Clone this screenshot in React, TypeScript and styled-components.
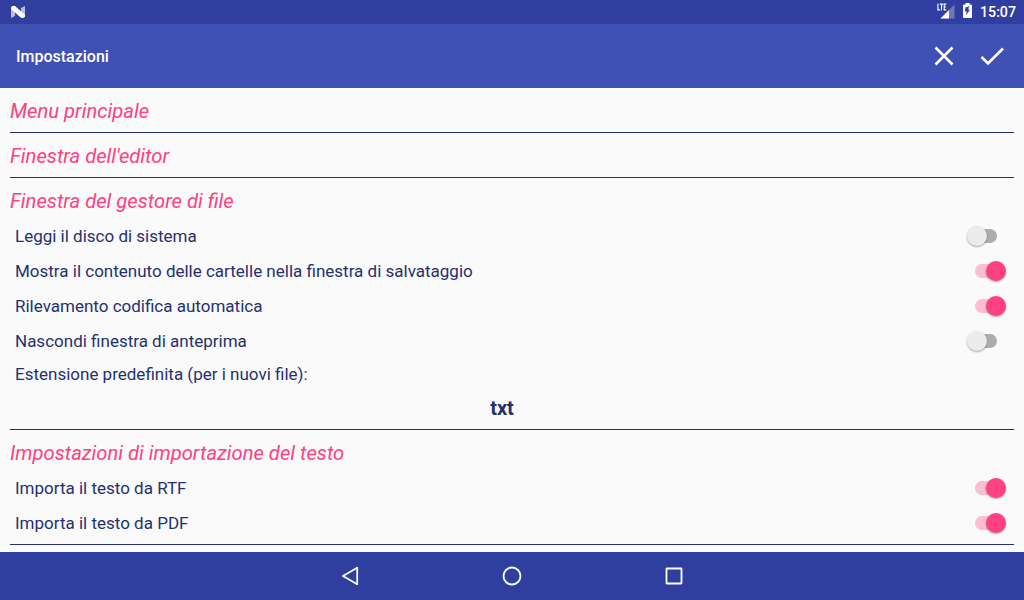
import React, { useState } from 'react'
import styled, { createGlobalStyle } from 'styled-components'

const color = {
  primary: '#3f51b5',
  primaryDark: '#303f9f',
  accent: '#ff4081',
  text: '#25316f',
  background: '#fafafa',
}

interface Option {
  label: string
  on: boolean
}

interface SettingRowProps {
  option: Option
}

const SettingRow = ({ option }: SettingRowProps) => {
  const [on, setOn] = useState(option.on)

  return (
    <Row>
      <Label>{option.label}</Label>
      <Switch
        type="button"
        role="switch"
        aria-checked={on}
        aria-label={option.label}
        $on={on}
        onClick={() => setOn(!on)}
      >
        <Track $on={on} />
        <Thumb $on={on} />
      </Switch>
    </Row>
  )
}

const fileOptions: Option[] = [
  { label: 'Leggi il disco di sistema', on: false },
  { label: 'Mostra il contenuto delle cartelle nella finestra di salvataggio', on: true },
  { label: 'Rilevamento codifica automatica', on: true },
  { label: 'Nascondi finestra di anteprima', on: false },
]

const importOptions: Option[] = [
  { label: 'Importa il testo da RTF', on: true },
  { label: 'Importa il testo da PDF', on: true },
]

const App = () => {
  return (
    <Screen>
      <GlobalStyle />
      <StatusBar>
        <svg width="16" height="14" viewBox="0 0 16 14">
          <path d="M1 2 L5 4.5 V11 L1 13Z M15 1 V12.5 L11 9.5 V3Z" fill="#fff" opacity="0.65" />
          <path d="M1 2 Q3 0.4 5 1 L15 9.8 V11.5 Q13 13.8 11 12.8 L1 4Z" fill="#fff" />
        </svg>
        <StatusIcons>
          <svg width="18" height="18" viewBox="0 0 18 18">
            <path d="M17.5 1.5 V15.5 H3.5Z" fill="#fff" opacity="0.3" />
            <path d="M12 7 V15.5 H3.5Z" fill="#fff" />
            <path
              d="M0.9 0.5 V6.9 H3 M2.8 1.1 H6.2 M4.5 1.1 V7.4 M9.3 1.1 H7.2 V6.9 H9.3 M7.2 4 H9"
              fill="none"
              stroke="#fff"
              strokeWidth="1.1"
            />
          </svg>
          <svg width="9" height="15" viewBox="0 0 9 15">
            <path
              fillRule="evenodd"
              d="M2.5 0 H6.5 V1.4 H8 Q9 1.4 9 2.4 V14 Q9 15 8 15 H1 Q0 15 0 14 V2.4 Q0 1.4 1 1.4 H2.5Z M6.2 3.3 L2.4 4.4 L2 8.4 H3.8 L2.8 12.8 L6.9 6.7 H5.2Z"
              fill="#fff"
            />
          </svg>
          <Clock>15:07</Clock>
        </StatusIcons>
      </StatusBar>

      <Toolbar>
        <Title>Impostazioni</Title>
        <IconButton aria-label="Annulla">
          <svg width="24" height="24" viewBox="0 0 24 24">
            <path d="M3.5 3.5 L20.5 20.5 M20.5 3.5 L3.5 20.5" stroke="#fff" strokeWidth="2.6" />
          </svg>
        </IconButton>
        <IconButton aria-label="Conferma">
          <svg width="24" height="24" viewBox="0 0 24 24">
            <path d="M1.5 13 L8 19.5 L23 4.5" fill="none" stroke="#fff" strokeWidth="2.6" />
          </svg>
        </IconButton>
      </Toolbar>

      <Content>
        <Section>
          <Heading>Menu principale</Heading>
        </Section>
        <Section>
          <Heading>Finestra dell'editor</Heading>
        </Section>
        <Section>
          <Heading>Finestra del gestore di file</Heading>
          {fileOptions.map(option => (
            <SettingRow key={option.label} option={option} />
          ))}
          <FieldLabel>Estensione predefinita (per i nuovi file):</FieldLabel>
          <FieldValue>txt</FieldValue>
        </Section>
        <Section>
          <Heading>Impostazioni di importazione del testo</Heading>
          {importOptions.map(option => (
            <SettingRow key={option.label} option={option} />
          ))}
        </Section>
      </Content>

      <NavBar>
        <NavIcon viewBox="0 0 24 24">
          <path d="M19.2 3.8 V20.2 L5 12Z" />
        </NavIcon>
        <NavIcon viewBox="0 0 24 24">
          <circle cx="12" cy="12" r="8.5" />
        </NavIcon>
        <NavIcon viewBox="0 0 24 24">
          <rect x="4.5" y="4.5" width="15" height="15" rx="0.5" />
        </NavIcon>
      </NavBar>
    </Screen>
  )
}

const GlobalStyle = createGlobalStyle`
  * {
    box-sizing: border-box;
  }

  body {
    margin: 0;
    font-family: Roboto, sans-serif;
  }
`

const Screen = styled.div`
  display: flex;
  flex-direction: column;
  width: 100%;
  height: 100vh;
  overflow: hidden;
  background: ${color.background};
`

const StatusBar = styled.div`
  display: flex;
  flex-shrink: 0;
  align-items: center;
  justify-content: space-between;
  height: 24px;
  padding: 0 8px 0 10px;
  background: ${color.primaryDark};
`

const StatusIcons = styled.div`
  display: flex;
  align-items: flex-start;
  height: 24px;
  padding-top: 3px;

  svg + svg {
    margin-left: 8px;
  }
`

const Clock = styled.span`
  margin-left: 8px;
  color: #fff;
  font-size: 14.2px;
  font-weight: 500;
  line-height: 18px;
`

const Toolbar = styled.header`
  display: flex;
  flex-shrink: 0;
  align-items: center;
  height: 64px;
  padding: 0 8px 0 16px;
  background: ${color.primary};
`

const Title = styled.h1`
  flex: 1;
  margin: 0;
  color: #fff;
  font-size: 16px;
  font-weight: 500;
`

const IconButton = styled.button`
  display: flex;
  align-items: center;
  justify-content: center;
  width: 48px;
  height: 48px;
  padding: 0;
  border: 0;
  background: none;
`

const Content = styled.main`
  flex: 1;
  min-height: 0;
  padding: 0 10px;
  overflow: hidden;
`

const Section = styled.section`
  padding-bottom: 4px;
  border-bottom: 1px solid ${color.text};
`

const Heading = styled.h2`
  height: 40px;
  margin: 0;
  color: ${color.accent};
  font-size: 20.2px;
  font-style: italic;
  font-weight: 400;
  line-height: 46px;
`

const Row = styled.div`
  display: flex;
  align-items: center;
  justify-content: space-between;
  height: 35px;
  padding: 0 8.5px 0 5px;
`

const Label = styled.span`
  color: ${color.text};
  font-size: 17px;
  line-height: 35px;
  padding-top: 1px;
`

const Switch = styled.button<{ $on: boolean }>`
  display: flex;
  align-items: center;
  justify-content: ${props => (props.$on ? 'flex-end' : 'flex-start')};
  position: relative;
  width: 39px;
  height: 20px;
  padding: 0;
  border: 0;
  background: none;
`

const Track = styled.span<{ $on: boolean }>`
  position: absolute;
  top: 3px;
  left: 8.5px;
  width: 22px;
  height: 14px;
  border-radius: 7px;
  background: ${props => (props.$on ? '#fdbdd3' : '#adadad')};
`

const Thumb = styled.span<{ $on: boolean }>`
  position: relative;
  width: 20px;
  height: 20px;
  border-radius: 50%;
  background: ${props => (props.$on ? color.accent : '#ececec')};
  box-shadow: 0 1px 2px rgba(0, 0, 0, 0.35);
`

const FieldLabel = styled(Label)`
  display: block;
  height: 33px;
  padding: 0 0 0 5px;
  line-height: 33px;
`

const FieldValue = styled.div`
  height: 34px;
  padding-right: 20px;
  color: ${color.text};
  font-size: 20px;
  font-weight: 700;
  line-height: 34px;
  text-align: center;
`

const NavBar = styled.nav`
  display: flex;
  flex-shrink: 0;
  align-items: center;
  justify-content: center;
  gap: 138px;
  height: 48px;
  background: ${color.primaryDark};
`

const NavIcon = styled.svg`
  width: 24px;
  height: 24px;
  fill: none;
  stroke: #fff;
  stroke-width: 1.8;
  stroke-linejoin: round;
`

export default App
